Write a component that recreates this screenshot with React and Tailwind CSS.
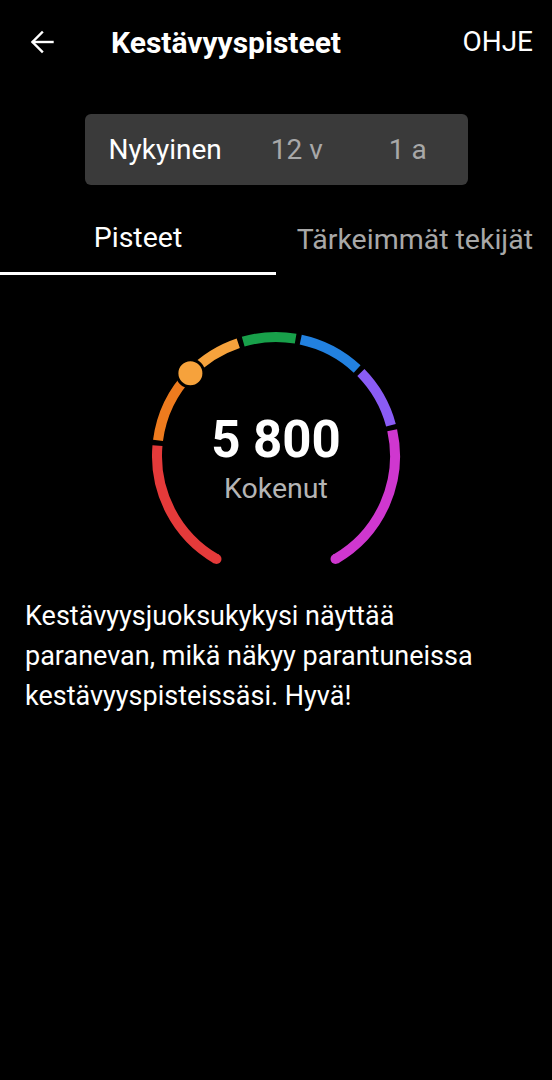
const CX = 140
const CY = 140
const R = 119

function pt(deg) {
    const a = (deg * Math.PI) / 180
    return [CX + R * Math.sin(a), CY - R * Math.cos(a)]
}

function arc(from, to) {
    const [x1, y1] = pt(from)
    const [x2, y2] = pt(to)
    const large = to - from > 180 ? 1 : 0
    return `M ${x1} ${y1} A ${R} ${R} 0 ${large} 1 ${x2} ${y2}`
}

const segments = [
    { from: -150, to: -85, color: '#e53a3a' },
    { from: -82.5, to: -46, color: '#ee7b1e' },
    { from: -46, to: -18.5, color: '#f6a23c' },
    { from: -16, to: 9.5, color: '#18a04a' },
    { from: 12, to: 43, color: '#2281e0' },
    { from: 45.5, to: 75, color: '#8a5cf5' },
    { from: 77.5, to: 150, color: '#cf37cf' },
]

function Gauge() {
    const [dx, dy] = pt(-46)
    const [sx, sy] = pt(-150)
    const [ex, ey] = pt(150)
    return (
        <div className="relative w-[280px] h-[250px]">
            <svg width="280" height="250" viewBox="0 0 280 250" className="absolute inset-0">
                {segments.map((s) => (
                    <path key={s.from} d={arc(s.from, s.to)} stroke={s.color} strokeWidth="10" fill="none" />
                ))}
                <circle cx={sx} cy={sy} r="5" fill="#e53a3a" />
                <circle cx={ex} cy={ey} r="5" fill="#cf37cf" />
                <circle cx={dx} cy={dy} r="13.5" fill="#f6a23c" stroke="#000" strokeWidth="3" />
            </svg>
            <div className="absolute left-0 right-0 top-[96px] flex flex-col items-center">
                <span className="text-[51px] leading-[56px] font-bold text-white">5 800</span>
                <span className="text-[28.5px] leading-[32px] text-[#b5b5b5] mt-[5px]">Kokenut</span>
            </div>
        </div>
    )
}

export default function App() {
    return (
        <div className="bg-black min-h-[1080px] w-[552px] text-white font-['Roboto',sans-serif]">
            {/* Header */}
            <header className="h-[84px] flex items-center pl-[30px] pr-[19px]">
                <svg width="24" height="24" viewBox="0 0 24 24" fill="none" stroke="white" strokeWidth="2.4" strokeLinecap="square">
                    <path d="M22.5 12H3" />
                    <path d="M12 2.5L2.5 12l9.5 9.5" />
                </svg>
                <h1 className="ml-[57px] text-[30px] font-bold">Kestävyyspisteet</h1>
                <span className="ml-auto text-[28px]">OHJE</span>
            </header>

            <div className="flex justify-center mt-[30px]">
                <div className="w-[383px] h-[71px] bg-[#3a3a3a] rounded-[6px] flex items-center pl-[24px] text-[28px]">
                    <span className="text-white">Nykyinen</span>
                    <span className="text-[#a8a8a8] ml-[49px]">12 v</span>
                    <span className="text-[#a8a8a8] ml-[66px]">1 a</span>
                </div>
            </div>

            {/* Tabs */}
            <div className="flex mt-[20px]">
                <div className="w-1/2 h-[70px] flex items-center justify-center border-b-[3px] border-white text-[28.5px] text-white">
                    Pisteet
                </div>
                <div className="w-1/2 h-[70px] flex items-center justify-end pr-[19px] text-[28.5px] text-[#a8a8a8]">
                    Tärkeimmät tekijät
                </div>
            </div>

            <div className="flex justify-center mt-[41px]">
                <Gauge />
            </div>

            <p className="px-[25px] mt-[30px] text-[27px] leading-[40px] text-white">
                Kestävyysjuoksukykysi näyttää paranevan, mikä näkyy parantuneissa kestävyyspisteissäsi. Hyvä!
            </p>
        </div>
    )
}
